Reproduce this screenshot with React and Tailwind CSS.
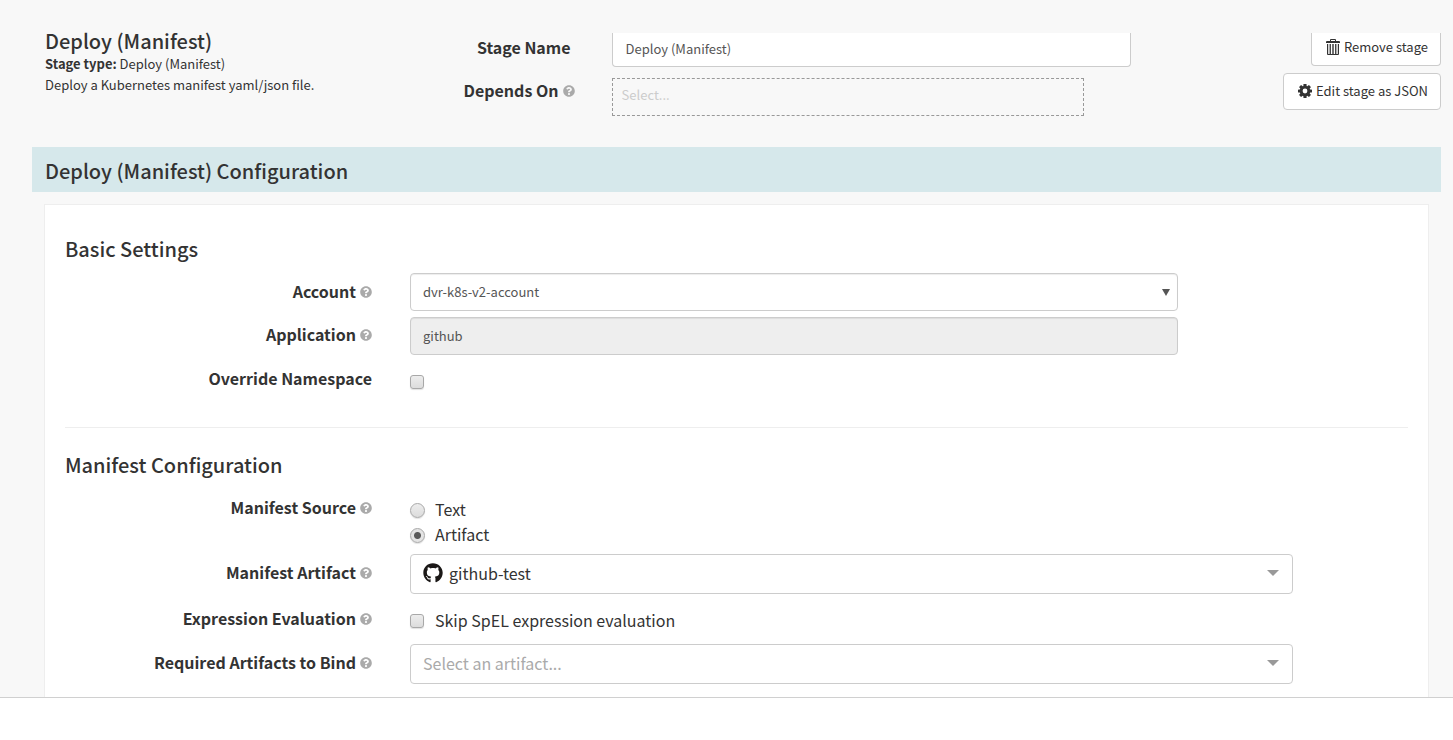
import React from "react";
import { FaGithub, FaQuestionCircle } from "react-icons/fa";

function TrashIcon() {
  return (
    <svg viewBox="0 0 14 16" className="h-4 w-3.5 shrink-0" fill="currentColor" aria-hidden="true">
      <path fillRule="evenodd" d="M4 1a1 1 0 0 1 1-1h4a1 1 0 0 1 1 1v1h3a1 1 0 0 1 1 1v1H0V3a1 1 0 0 1 1-1h3zM5 1v1h4V1z" />
      <path fillRule="evenodd" d="M1 5h12v10a1 1 0 0 1-1 1H2a1 1 0 0 1-1-1zM2.2 5v10h1.4V5zM4.9 5v10h1.4V5zM7.7 5v10h1.4V5zM10.4 5v10h1.4V5z" />
    </svg>
  );
}

function GearIcon() {
  return (
    <svg viewBox="0 0 14 14" className="h-3.5 w-3.5 shrink-0" aria-hidden="true">
      <g fill="currentColor">
        {[0, 45, 90, 135].map((a) => (
          <rect key={a} x="5.4" y="0" width="3.2" height="14" rx="0.6" transform={`rotate(${a} 7 7)`} />
        ))}
        <circle cx="7" cy="7" r="5.3" />
      </g>
      <circle cx="7" cy="7" r="2.4" fill="#fff" />
    </svg>
  );
}

function Help() {
  return <FaQuestionCircle className="mt-0.5 ml-1 inline-block h-3 w-3 shrink-0 text-[#aaaaaa]" aria-hidden="true" />;
}

function Label({ htmlFor, help, children }) {
  return (
    <label htmlFor={htmlFor} className="flex items-center justify-end text-right text-base leading-[18px] font-bold whitespace-nowrap">
      {children}
      {help && <Help />}
    </label>
  );
}

function Row({ id, label, help, className, children }) {
  return (
    <div className={`grid grid-cols-[307fr_998fr] gap-x-[38px] ${className}`}>
      <div>
        <Label htmlFor={id} help={help}>{label}</Label>
      </div>
      <div>{children}</div>
    </div>
  );
}

const tick =
  "m-0 shrink-0 appearance-none border border-[#a8a8a8] bg-linear-to-b from-[#ededed] to-[#dcdcdc] shadow-[0_1px_1px_rgba(0,0,0,0.12)] checked:bg-[radial-gradient(circle,#5a5a5a_0_3px,#e4e4e4_4px)]";
const field =
  "block w-full appearance-none rounded border border-[#cccccc] px-3 text-[13px] leading-5 text-[#555555] shadow-[inset_0_1px_1px_rgba(0,0,0,0.075)]";
const picker =
  "block h-10 w-full appearance-none rounded border border-[#cccccc] bg-white pr-9 pb-0.5 text-base leading-6";

function Caret() {
  return (
    <svg viewBox="0 0 12 6" className="pointer-events-none absolute top-4 right-3.5 h-1.5 w-3 text-[#999999]" aria-hidden="true">
      <path d="M0 0h12L6 6z" fill="currentColor" />
    </svg>
  );
}

export default function App() {
  return (
    <div className="flex min-h-screen flex-col bg-white font-['Noto_Sans_CJK_SC',sans-serif] text-[#333333]">
      <main className="flex flex-1 flex-col bg-[#f8f8f8] pt-[29px] pr-3 pl-8">
        <header className="flex h-[118px] items-start">
          <div className="w-[30%] pl-[13px] text-[13px] leading-[21px]">
            <h1 className="text-xl leading-6 font-medium">Deploy (Manifest)</h1>
            <p><strong>Stage type:</strong> Deploy (Manifest)</p>
            <p>Deploy a Kubernetes manifest yaml/json file.</p>
          </div>
          <div className="grid w-[48%] grid-cols-[120fr_520fr] gap-x-[37px] pt-1">
            <div className="pt-[5px] pr-1">
              <Label htmlFor="stage-name">Stage Name</Label>
            </div>
            <input id="stage-name" defaultValue="Deploy (Manifest)" className="h-[34px] w-full rounded-b border border-t-0 border-[#cccccc] bg-white px-[13px] pb-0.5 text-[13px] text-[#555555]" />
            <div className="pt-3.5">
              <Label htmlFor="depends-on" help>Depends On</Label>
            </div>
            <select id="depends-on" defaultValue="" className="mt-[11px] h-[38px] w-[91%] appearance-none border border-dashed border-[#999999] bg-transparent px-[9px] pb-1 text-[13px] text-[#cccccc]">
              <option value="">Select...</option>
            </select>
          </div>
          <div className="flex flex-1 flex-col items-end pt-1 text-[13px]">
            <button type="button" className="flex h-[33px] items-center gap-1 rounded-b border border-t-0 border-[#cccccc] bg-white pr-3 pb-1 pl-3.5 whitespace-nowrap">
              <TrashIcon />Remove stage
            </button>
            <button type="button" className="mt-[7px] flex h-[37px] items-center gap-1 rounded border border-[#cccccc] bg-white pr-3 pb-0.5 pl-3.5 whitespace-nowrap">
              <GearIcon />Edit stage as JSON
            </button>
          </div>
        </header>

        <h2 className="bg-[#d6e8eb] px-[13px] pt-[11px] pb-[9px] text-xl leading-[25px] font-medium">Deploy (Manifest) Configuration</h2>

        <section className="mx-3 mt-3 flex-1 border border-b-0 border-[#eeeeee] bg-white px-5 pb-3">
          <h3 className="mt-8 text-xl leading-6 font-medium">Basic Settings</h3>
          <Row id="account" label="Account" help className="mt-3 [&>div:first-child]:pt-[9px]">
            <div className="relative w-[77%]">
              <select id="account" className={`${field} h-[38px] bg-white`}>
                <option>dvr-k8s-v2-account</option>
              </select>
              <svg viewBox="0 0 8 7" className="pointer-events-none absolute top-4 right-2 h-[7px] w-2 text-[#555555]" aria-hidden="true">
                <path d="M0 0h8L4 7z" fill="currentColor" />
              </svg>
            </div>
          </Row>
          <Row id="application" label="Application" help className="mt-1.5 [&>div:first-child]:pt-2">
            <div className="w-[77%]">
              <input id="application" readOnly value="github" className={`${field} h-[38px] bg-[#eeeeee] pb-0.5`} />
            </div>
          </Row>
          <Row id="override" label="Override Namespace" className="mt-3.5">
            <input id="override" type="checkbox" className={`${tick} mt-1.5 block h-3.5 w-3.5 rounded-[3px]`} />
          </Row>
          <hr className="mt-[38px] border-[#eeeeee]" />
          <h3 className="mt-[25px] text-xl leading-6 font-medium">Manifest Configuration</h3>
          <Row label="Manifest Source" help className="mt-[21px]">
            <div>
              <label className="flex h-[25px] items-center gap-2.5 text-base leading-5">
                <input type="radio" name="source" className={`${tick} h-[15px] w-[15px] rounded-full`} />
                <span className="pb-1">Text</span>
              </label>
              <label className="flex h-[25px] items-center gap-2.5 text-base leading-5">
                <input type="radio" name="source" defaultChecked className={`${tick} h-[15px] w-[15px] rounded-full`} />
                <span className="pb-1">Artifact</span>
              </label>
            </div>
          </Row>
          <Row id="artifact" label="Manifest Artifact" help className="mt-1.5 [&>div:first-child]:pt-[9px]">
            <div className="relative w-[88.5%]">
              <select id="artifact" className={`${picker} pl-[38px]`}>
                <option>github-test</option>
              </select>
              <FaGithub className="pointer-events-none absolute top-[9px] left-[13px] h-5 w-5 text-[#1b1817]" aria-hidden="true" />
              <Caret />
            </div>
          </Row>
          <Row id="skip" label="Expression Evaluation" help className="mt-[15px]">
            <label className="flex items-center gap-[11px] pt-px text-base leading-5">
              <input id="skip" type="checkbox" className={`${tick} h-3.5 w-3.5 rounded-[3px]`} />
              <span className="pb-0.5">Skip SpEL expression evaluation</span>
            </label>
          </Row>
          <Row id="bind" label="Required Artifacts to Bind" help className="mt-3 [&>div:first-child]:pt-[9px]">
            <div className="relative w-[88.5%]">
              <select id="bind" defaultValue="" className={`${picker} pl-3 text-[#aaaaaa]`}>
                <option value="">Select an artifact...</option>
              </select>
              <Caret />
            </div>
          </Row>
        </section>
      </main>
      <footer className="h-[43px] border-t border-[#d0d0d0] bg-white" />
    </div>
  );
}
